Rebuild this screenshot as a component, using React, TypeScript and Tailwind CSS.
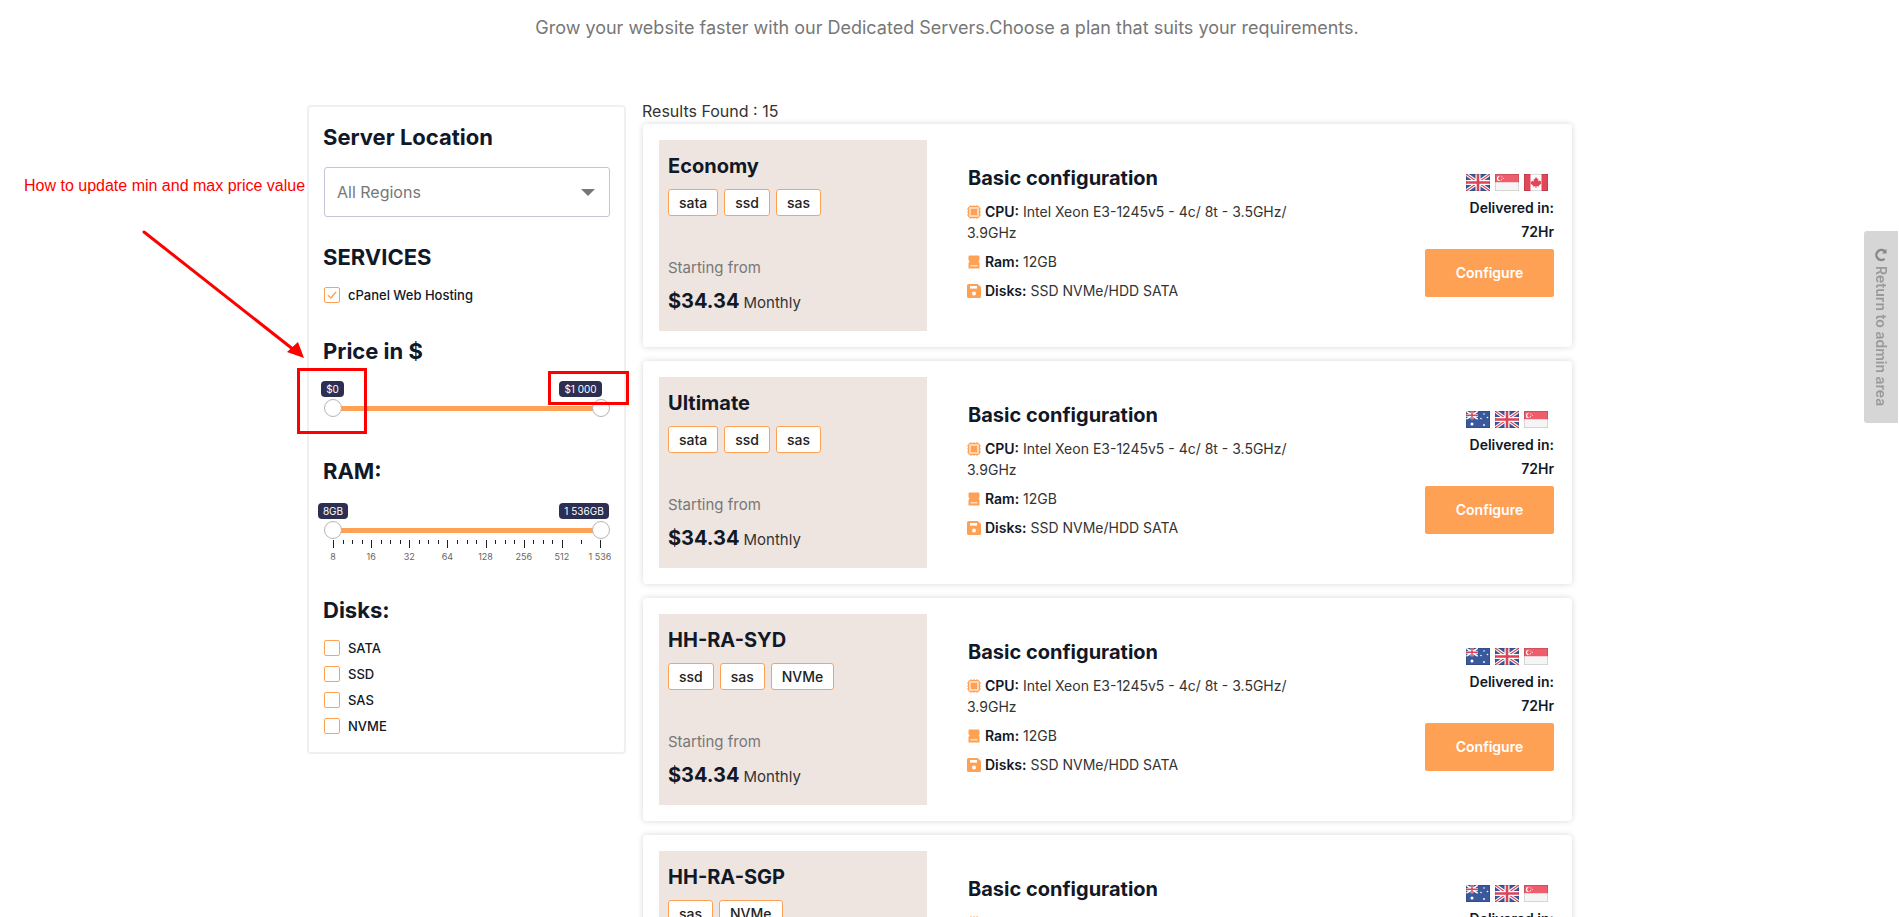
import React from "react";

const ORANGE = "#ffa155";

function Uk() {
  return (
    <g>
      <rect width="24" height="17" fill="#2a4b94" />
      <path d="M0 0L24 17M24 0L0 17" stroke="#fff" strokeWidth="3.4" />
      <path d="M0 0L24 17M24 0L0 17" stroke="#d8344a" strokeWidth="1.1" />
      <path d="M12 0V17M0 8.5H24" stroke="#fff" strokeWidth="5" />
      <path d="M12 0V17M0 8.5H24" stroke="#d8344a" strokeWidth="2.6" />
    </g>
  );
}
function Sg() {
  return (
    <g>
      <rect width="24" height="8.5" fill="#ee4f60" />
      <rect y="8.5" width="24" height="8.5" fill="#f5f5f5" />
      <circle cx="4.6" cy="4.4" r="2.6" fill="#fff" />
      <circle cx="5.6" cy="4.4" r="2.4" fill="#ee4f60" />
      <circle cx="7" cy="3" r="0.5" fill="#fff" />
      <circle cx="8.4" cy="4.4" r="0.5" fill="#fff" />
      <circle cx="6.6" cy="5.6" r="0.5" fill="#fff" />
    </g>
  );
}
function Ca() {
  return (
    <g>
      <rect width="24" height="17" fill="#fdfdfd" />
      <rect width="6.5" height="17" fill="#e0384a" />
      <rect x="17.5" width="6.5" height="17" fill="#e0384a" />
      <path
        d="M12 2.8l1.3 2.3 1.2-.6-.5 3 1.4-1.2.4 1 1.6-.2-.5 1.7.7.4-2.7 2.2.3 1-2.7-.4V14h-1v-1.8l-2.7.4.3-1-2.7-2.2.7-.4-.5-1.7 1.6.2.4-1 1.4 1.2-.5-3 1.2.6z"
        fill="#e0384a"
      />
    </g>
  );
}
function Au() {
  return (
    <g>
      <rect width="24" height="17" fill="#2a4b94" />
      <svg x="0" y="0" width="12" height="8.5" viewBox="0 0 24 17">
        <path d="M0 0L24 17M24 0L0 17" stroke="#fff" strokeWidth="3.4" />
        <path d="M12 0V17M0 8.5H24" stroke="#fff" strokeWidth="5.5" />
        <path d="M12 0V17M0 8.5H24" stroke="#d8344a" strokeWidth="3" />
      </svg>
      <circle cx="6" cy="13" r="1.5" fill="#fff" />
      <circle cx="18" cy="3" r="0.8" fill="#fff" />
      <circle cx="21.5" cy="6.5" r="0.8" fill="#fff" />
      <circle cx="15" cy="7.5" r="0.8" fill="#fff" />
      <circle cx="18" cy="14" r="0.9" fill="#fff" />
    </g>
  );
}
const FLAGS: Record<string, () => React.ReactElement> = { uk: Uk, sg: Sg, ca: Ca, au: Au };

function Flag({ code }: { code: string }) {
  const F = FLAGS[code];
  return (
    <svg width="24" height="17" viewBox="0 0 24 17" className="block">
      <F />
      <rect width="24" height="17" fill="#fff" opacity="0.08" />
      <rect x="0.25" y="0.25" width="23.5" height="16.5" fill="none" stroke="#000" strokeOpacity="0.25" strokeWidth="0.5" />
    </svg>
  );
}

function CpuIcon() {
  return (
    <svg width="14" height="14" viewBox="0 0 14 14" className="shrink-0" fill="none">
      <rect x="1.5" y="1.5" width="11" height="11" rx="1.6" fill={ORANGE} fillOpacity="0.45" stroke={ORANGE} />
      <rect x="4" y="4" width="6" height="6" fill={ORANGE} />
      <path d="M4 0v1.5M7 0v1.5M10 0v1.5M4 12.5V14M7 12.5V14M10 12.5V14M0 4h1.5M0 7h1.5M0 10h1.5M12.5 4H14M12.5 7H14M12.5 10H14" stroke={ORANGE} />
    </svg>
  );
}
function RamIcon() {
  return (
    <svg width="14" height="14" viewBox="0 0 14 14" className="shrink-0">
      <path d="M2.5 0.5h9a1 1 0 0 1 1 1V5l-1 1.5 1 1.5v5.5h-11V8l1-1.5-1-1.5V1.5a1 1 0 0 1 1-1z" fill={ORANGE} />
      <rect x="3.5" y="10" width="7" height="1.5" fill="#ffd9b8" />
    </svg>
  );
}
function DiskIcon() {
  return (
    <svg width="14" height="14" viewBox="0 0 14 14" className="shrink-0">
      <path d="M1.5 0h9L14 3v9.5a1.5 1.5 0 0 1-1.5 1.5h-11A1.5 1.5 0 0 1 0 12.5v-11A1.5 1.5 0 0 1 1.5 0z" fill={ORANGE} />
      <rect x="3" y="2" width="7" height="2.6" fill="#fff" />
      <circle cx="7" cy="9.5" r="2" fill="#fff" />
    </svg>
  );
}

function Checkbox({ label, checked }: { label: string; checked?: boolean }) {
  return (
    <div className="flex h-4 items-center gap-2">
      <span className="flex h-4 w-4 items-center justify-center rounded-[2px] border border-[#ffa155] bg-white">
        {checked && (
          <svg width="10" height="10" viewBox="0 0 10 10" fill="none">
            <path d="M1 5.2L3.9 8 9 2" stroke="#ffa155" strokeWidth="1.4" />
          </svg>
        )}
      </span>
      <span className="text-[13px] font-medium leading-none text-[#111827]">{label}</span>
    </div>
  );
}

function Tip({ text, cls }: { text: string; cls: string }) {
  return (
    <span className={"absolute flex h-[16px] items-center justify-center rounded-[4px] bg-[#2c2f52] text-[10px] leading-none text-white " + cls}>
      {text}
    </span>
  );
}

function Handle({ cls }: { cls: string }) {
  return <span className={"absolute top-[18px] h-[18px] w-[18px] rounded-full border border-[#b5b5b5] bg-white " + cls} />;
}

const TICKS = Array.from({ length: 29 }, (_, i) => i).filter((i) => i < 25 || i === 26 || i === 28);
const LABELS = ["8", "16", "32", "64", "128", "256", "512", "1 536"];

function Slider({ low, high, lowCls, highCls, scale }: { low: string; high: string; lowCls: string; highCls: string; scale?: boolean }) {
  return (
    <div className={"relative w-full " + (scale ? "h-[66px]" : "h-[36px]")}>
      <Tip text={low} cls={lowCls} />
      <Tip text={high} cls={highCls} />
      <div className="absolute left-[9px] right-[10px] top-[25px] h-[5px] bg-[#ffa155]" />
      <Handle cls="left-0" />
      <Handle cls="left-[268px]" />
      {scale && (
        <>
          {TICKS.map((i) => (
            <span
              key={i}
              className="absolute w-px bg-[#222]"
              style={{ left: 9 + (i * 267) / 28, top: 37, height: i % 4 === 0 ? 8 : 4 }}
            />
          ))}
          {LABELS.map((l, i) => (
            <span
              key={l}
              className="absolute w-10 -translate-x-1/2 text-center text-[9px] leading-none text-[#666]"
              style={{ left: 9 + (i * 267) / 7, top: 49 }}
            >
              {l}
            </span>
          ))}
        </>
      )}
    </div>
  );
}

const CARDS = [
  { name: "Economy", tags: ["sata", "ssd", "sas"], flags: ["uk", "sg", "ca"] },
  { name: "Ultimate", tags: ["sata", "ssd", "sas"], flags: ["au", "uk", "sg"] },
  { name: "HH-RA-SYD", tags: ["ssd", "sas", "NVMe"], flags: ["au", "uk", "sg"] },
  { name: "HH-RA-SGP", tags: ["sas", "NVMe"], flags: ["au", "uk", "sg"] },
];

function Card({ name, tags, flags }: { name: string; tags: string[]; flags: string[] }) {
  return (
    <div className="flex h-[223px] w-[929px] shrink-0 rounded-[4px] bg-white py-4 pl-4 pr-[18px] shadow-[0_0_6px_rgba(0,0,0,0.16)]">
      <div className="flex w-[268px] shrink-0 flex-col bg-[#efe5e0] px-[9px] pt-[14px]">
        <h3 className="text-[20px] font-bold leading-6 text-[#111827]">{name}</h3>
        <div className="mt-[11px] flex gap-[6px]">
          {tags.map((t) => (
            <span key={t} className="flex h-[27px] items-center rounded-[3px] border border-[#ffa155] bg-white px-[10px] text-[14px] font-medium leading-none text-[#222]">
              {t}
            </span>
          ))}
        </div>
        <p className="mt-[42px] text-[15px] leading-5 text-[#777]">Starting from</p>
        <p className="mt-[11px] flex items-baseline gap-[4px] leading-6 text-[#111827]">
          <span className="text-[20px] font-bold">$34.34</span>
          <span className="text-[15px] text-[#333]">Monthly</span>
        </p>
      </div>
      <div className="ml-[41px] w-[340px] pt-[26px]">
        <h3 className="text-[20px] font-bold leading-6 text-[#111827]">Basic configuration</h3>
        <div className="-ml-px mt-[11px] text-[14px] leading-[21px] text-[#333]">
          <p>
            <span className="inline-flex align-[-2px]"><CpuIcon /></span>{" "}
            <b className="font-semibold text-[#111827]">CPU:</b> Intel Xeon E3-1245v5 - 4c/ 8t - 3.5GHz/ 3.9GHz
          </p>
          <p className="mt-[8px]">
            <span className="inline-flex align-[-2px]"><RamIcon /></span>{" "}
            <b className="font-semibold text-[#111827]">Ram:</b> 12GB
          </p>
          <p className="mt-[8px]">
            <span className="inline-flex align-[-2px]"><DiskIcon /></span>{" "}
            <b className="font-semibold text-[#111827]">Disks:</b> SSD NVMe/HDD SATA
          </p>
        </div>
      </div>
      <div className="ml-auto flex w-[129px] flex-col items-end pt-[34px]">
        <div className="mr-[6px] flex gap-[5px]">
          {flags.map((f, i) => (
            <Flag key={i} code={f} />
          ))}
        </div>
        <p className="mt-[5px] text-[14px] font-semibold leading-6 text-[#111827]">Delivered in:</p>
        <p className="text-[14px] font-semibold leading-6 text-[#111827]">72Hr</p>
        <button className="mt-[5px] h-[48px] w-[129px] shrink-0 rounded-[2px] bg-[#ffa155] pb-[2px] text-[14px] font-semibold text-white">Configure</button>
      </div>
    </div>
  );
}

function Heading({ children, cls }: { children: React.ReactNode; cls: string }) {
  return <h2 className={"-ml-px text-[22px] font-bold leading-7 text-[#111827] " + cls}>{children}</h2>;
}

export default function App() {
  return (
    <div className="relative h-[917px] w-full overflow-hidden bg-white font-['Inter',sans-serif]">
      <p className="pr-[5px] pt-[16px] text-center text-[18px] leading-6 text-[#777]">
        Grow your website faster with our Dedicated Servers.Choose a plan that suits your requirements.
      </p>
      <div className="ml-[307px] mt-[65px] flex gap-[16px]">
        <aside className="h-[649px] w-[319px] shrink-0 rounded-[4px] border-2 border-[#f0f0f0] bg-white px-[15px] pt-[10px]">
          <Heading cls="mt-[6px]">Server Location</Heading>
          <div className="mt-[16px] flex h-[50px] w-[286px] items-center justify-between rounded-[3px] border border-[#c5c3d6] pl-[12px] pr-[14px] text-[16px] text-[#777]">
            <span>All Regions</span>
            <span className="h-0 w-0 border-x-[7px] border-t-[7px] border-x-transparent border-t-[#777]" />
          </div>
          <Heading cls="mt-[26px]">SERVICES</Heading>
          <div className="mt-[16px]">
            <Checkbox label="cPanel Web Hosting" checked />
          </div>
          <Heading cls="mt-[34px]">Price in $</Heading>
          <div className="mt-[16px]">
            <Slider low="$0" high="$1 000" lowCls="left-[-3px] top-[0px] w-[23px]" highCls="left-[235px] top-[0px] w-[43px]" />
          </div>
          <Heading cls="mt-[40px]">RAM:</Heading>
          <div className="mt-[18px]">
            <Slider low="8GB" high="1 536GB" lowCls="left-[-6px] top-[0px] w-[30px]" highCls="left-[235px] top-[0px] w-[50px]" scale />
          </div>
          <Heading cls="mt-[27px]">Disks:</Heading>
          <div className="mt-[16px] flex flex-col gap-[10px]">
            {["SATA", "SSD", "SAS", "NVME"].map((d) => (
              <Checkbox key={d} label={d} />
            ))}
          </div>
        </aside>
        <main className="flex flex-col">
          <p className="-mt-[5px] h-[22px] text-[16px] leading-[22px] text-[#333]">Results Found : 15</p>
          <div className="ml-[1px] mt-[2px] flex flex-col gap-[14px]">
            {CARDS.map((c) => (
              <Card key={c.name} {...c} />
            ))}
          </div>
        </main>
      </div>

      <p className="absolute left-[24px] top-[176px] font-['Liberation_Sans',sans-serif] text-[16px] leading-[20px] text-[#f00]">
        How to update min and max price value
      </p>
      <svg className="pointer-events-none absolute left-0 top-0" width="320" height="370" fill="none">
        <path d="M144 232L294 350" stroke="#f00" strokeWidth="3" strokeLinecap="round" />
        <path d="M304 358L287 352L298 342Z" fill="#f00" />
      </svg>
      <div className="pointer-events-none absolute left-[297px] top-[368px] h-[66px] w-[70px] border-[3px] border-[#f00]" />
      <div className="pointer-events-none absolute left-[548px] top-[371px] h-[34px] w-[81px] border-[3px] border-[#f00]" />

      <div className="absolute right-px top-[231px] flex h-[192px] w-[34px] items-center justify-center rounded-l-[3px] bg-[#d6d6d6]">
        <div className="flex items-center gap-[4px] text-[14px] font-semibold text-[#999] blur-[0.4px] [writing-mode:vertical-rl]">
          <svg width="14" height="14" viewBox="0 0 14 14" fill="none">
            <path d="M10.6 3.2A5 5 0 1 0 10.6 10.8" stroke="#888" strokeWidth="2.4" />
            <path d="M12.5 0.8V5.6H8z" fill="#888" />
          </svg>
          <span>Return to admin area</span>
        </div>
      </div>
    </div>
  );
}
